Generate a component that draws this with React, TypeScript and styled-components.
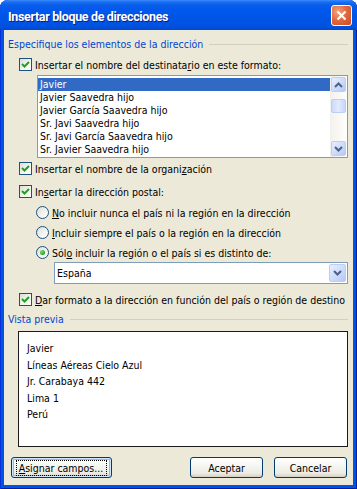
import React from 'react';
import styled, { createGlobalStyle } from 'styled-components';

const Global = createGlobalStyle`
  html, body { margin: 0; padding: 0; background: #ffffff; }
  body {
    font-family: "DejaVu Sans Condensed", "DejaVu Sans", sans-serif;
    font-size: 10.5px;
    color: #000;
  }
  * { box-sizing: border-box; }
`;

const Window = styled.div`
  width: 357px;
  height: 489px;
  display: flex;
  flex-direction: column;
  border-radius: 8px 8px 0 0;
  overflow: hidden;
  background: #0054e3;
  box-shadow: inset 1px 0 0 #0831d9, inset -1px 0 0 #001ea0, inset 0 -1px 0 #001ea0;
`;

const TitleBar = styled.div`
  height: 30px;
  flex: none;
  display: flex;
  align-items: center;
  justify-content: space-between;
  padding: 0 5px 0 8px;
  background: linear-gradient(
    to bottom,
    #3c8cff 0px,
    #1a6ef2 2px,
    #0a5ee8 5px,
    #0058ee 10px,
    #0055e5 18px,
    #0053e1 26px,
    #0049d0 30px
  );
`;

const Title = styled.span`
  color: #ffffff;
  font-family: Roboto, "Liberation Sans", sans-serif;
  font-weight: bold;
  font-size: 12.5px;
  letter-spacing: -0.35px;
  text-shadow: 1px 1px 0 #0a1e82;
  padding-top: 2px;
`;

const CloseBtn = styled.div`
  width: 21px;
  height: 21px;
  border: 1px solid #ffffff;
  border-radius: 3px;
  background: radial-gradient(circle at 30% 30%, #f3a47f 0%, #e3693f 45%, #cc4b22 100%);
  display: flex;
  align-items: center;
  justify-content: center;
  margin-top: 1px;
`;

const Client = styled.div`
  flex: 1;
  margin: 0 4px 4px 4px;
  background: #ece9d8;
  display: flex;
  flex-direction: column;
  padding: 7px 5px 0 4px;
`;

const SectionHeader = styled.div<{ $mt?: number }>`
  display: flex;
  align-items: center;
  height: 13px;
  margin-top: ${(p) => p.$mt ?? 0}px;
  color: #0046d5;
  white-space: nowrap;
`;

const HeaderLine = styled.div`
  flex: 1;
  height: 1px;
  margin-left: 6px;
  margin-top: 2px;
  background: #d0d0bf;
`;

const Row = styled.div<{ $mt: number; $ml: number }>`
  display: flex;
  align-items: center;
  height: 13px;
  margin-top: ${(p) => p.$mt}px;
  margin-left: ${(p) => p.$ml}px;
  white-space: nowrap;
  gap: 3px;
`;

const Box = styled.div`
  width: 13px;
  height: 13px;
  flex: none;
  border: 1px solid #1c5180;
  background: linear-gradient(135deg, #dcdcd7 0%, #f5f5f2 60%, #ffffff 100%);
  display: flex;
  align-items: center;
  justify-content: center;
`;

const Radio = styled.div`
  width: 13px;
  height: 13px;
  flex: none;
  border: 1px solid #1c5180;
  border-radius: 50%;
  background: linear-gradient(135deg, #dcdcd7 0%, #f5f5f2 60%, #ffffff 100%);
  display: flex;
  align-items: center;
  justify-content: center;
`;

const RadioDot = styled.div`
  width: 5px;
  height: 5px;
  border-radius: 50%;
  background: radial-gradient(circle at 35% 35%, #7fe07c 0%, #2eac2b 60%, #1e8f1b 100%);
`;

const U = styled.span`
  text-decoration: underline;
  text-underline-offset: 1px;
`;

const ListBox = styled.div`
  margin: 4px 0 0 29px;
  height: 83px;
  border: 1px solid #7f9db9;
  background: #ffffff;
  display: flex;
`;

const Items = styled.div`
  flex: 1;
  padding-top: 2px;
  display: flex;
  flex-direction: column;
`;

const Item = styled.div<{ $sel?: boolean }>`
  height: 13px;
  line-height: 13px;
  padding-left: 2px;
  white-space: nowrap;
  background: ${(p) => (p.$sel ? '#316ac5' : 'transparent')};
  color: ${(p) => (p.$sel ? '#ffffff' : '#000000')};
`;

const ScrollTrack = styled.div`
  width: 17px;
  flex: none;
  display: flex;
  flex-direction: column;
  background: linear-gradient(to right, #f3f1ec, #fefefb);
`;

const ScrollBtn = styled.div`
  width: 15px;
  height: 15px;
  margin: 1px;
  border: 1px solid #bccef5;
  border-radius: 2px;
  background: linear-gradient(135deg, #e8efff 0%, #c9d9fb 60%, #b5c8f3 100%);
  display: flex;
  align-items: center;
  justify-content: center;
`;

const Thumb = styled.div`
  width: 15px;
  height: 14px;
  margin: 6px 1px 0 1px;
  border: 1px solid #bccef5;
  border-radius: 2px;
  background: linear-gradient(to right, #cbdafc 0%, #e2eaff 50%, #c6d6fb 100%);
`;

const Spacer = styled.div`
  flex: 1;
`;

const Combo = styled.div`
  margin: 3px 0 0 46px;
  height: 22px;
  border: 1px solid #7f9db9;
  background: #ffffff;
  display: flex;
  align-items: center;
  padding-left: 2px;
`;

const ComboText = styled.div`
  flex: 1;
`;

const ComboBtn = styled(ScrollBtn)`
  width: 17px;
  height: 18px;
  margin: 1px;
`;

const Preview = styled.div`
  margin: 6px 0 0 10px;
  height: 116px;
  border: 1px solid #1a1a1a;
  background: #ffffff;
  padding: 8px 8px;
  line-height: 16.6px;
`;

const ButtonRow = styled.div`
  display: flex;
  margin: 10px 1px 0 3px;
  gap: 11px;
`;

const Btn = styled.div<{ $w: number; $focus?: boolean }>`
  width: ${(p) => p.$w}px;
  height: 21px;
  border: 1px solid #003c74;
  border-radius: 3px;
  background: linear-gradient(to bottom, #ffffff 0%, #f6f6f1 40%, #ecebe4 80%, #d6d0c5 100%);
  display: flex;
  align-items: center;
  justify-content: center;
  box-shadow: ${(p) =>
    p.$focus ? 'inset 0 0 0 1px #cee7ff, inset 0 0 0 2px #98b8ea' : 'inset 0 -1px 0 #d6d0c5'};
`;

const FocusRect = styled.span`
  outline: 1px dotted #000;
  outline-offset: 0px;
  padding: 1px 3px 1px 2px;
  line-height: 12px;
`;

const Wide = styled.div`
  flex: 1;
`;

const Check = () => (
  <svg width="9" height="9" viewBox="0 0 9 9">
    <path d="M1 4 L3.5 6.5 L8 2" fill="none" stroke="#21a121" strokeWidth="2" />
  </svg>
);

const CheckBox = () => (
  <Box>
    <Check />
  </Box>
);

const Chevron = ({ up }: { up?: boolean }) => (
  <svg width="9" height="6" viewBox="0 0 9 6">
    <path
      d={up ? 'M1 5 L4.5 1.5 L8 5' : 'M1 1 L4.5 4.5 L8 1'}
      fill="none"
      stroke="#4d6185"
      strokeWidth="2"
    />
  </svg>
);

const items = [
  'Javier',
  'Javier Saavedra hijo',
  'Javier García Saavedra hijo',
  'Sr. Javi Saavedra hijo',
  'Sr. Javi García Saavedra hijo',
  'Sr. Javier Saavedra hijo',
];

const previewLines = ['Javier', 'Líneas Aéreas Cielo Azul', 'Jr. Carabaya 442', 'Lima 1', 'Perú'];

export default function App() {
  return (
    <>
      <Global />
      <Window>
        <TitleBar>
          <Title>Insertar bloque de direcciones</Title>
          <CloseBtn>
            <svg width="11" height="11" viewBox="0 0 11 11">
              <path d="M1.5 1.5 L9.5 9.5 M9.5 1.5 L1.5 9.5" stroke="#ffffff" strokeWidth="2.2" />
            </svg>
          </CloseBtn>
        </TitleBar>
        <Client>
          <SectionHeader>
            Especifique los elementos de la dirección
            <HeaderLine />
          </SectionHeader>
          <Row $mt={8} $ml={11}>
            <CheckBox />
            <span>
              Insertar el nombre del destinata<U>r</U>io en este formato:
            </span>
          </Row>
          <ListBox>
            <Items>
              {items.map((t, i) => (
                <Item key={t} $sel={i === 0}>
                  {t}
                </Item>
              ))}
            </Items>
            <ScrollTrack>
              <ScrollBtn>
                <Chevron up />
              </ScrollBtn>
              <Thumb />
              <Spacer />
              <ScrollBtn>
                <Chevron />
              </ScrollBtn>
            </ScrollTrack>
          </ListBox>
          <Row $mt={4} $ml={11}>
            <CheckBox />
            <span>
              Insertar el nombre de la organi<U>z</U>ación
            </span>
          </Row>
          <Row $mt={10} $ml={11}>
            <CheckBox />
            <span>
              In<U>s</U>ertar la dirección postal:
            </span>
          </Row>
          <Row $mt={8} $ml={28}>
            <Radio />
            <span>
              <U>N</U>o incluir nunca el país ni la región en la dirección
            </span>
          </Row>
          <Row $mt={7} $ml={28}>
            <Radio />
            <span>
              <U>I</U>ncluir siempre el país o la región en la dirección
            </span>
          </Row>
          <Row $mt={7} $ml={28}>
            <Radio>
              <RadioDot />
            </Radio>
            <span>
              Sól<U>o</U> incluir la región o el país si es distinto de:
            </span>
          </Row>
          <Combo>
            <ComboText>España</ComboText>
            <ComboBtn>
              <Chevron />
            </ComboBtn>
          </Combo>
          <Row $mt={9} $ml={11}>
            <CheckBox />
            <span>
              <U>D</U>ar formato a la dirección en función del país o región de destino
            </span>
          </Row>
          <SectionHeader $mt={6}>
            Vista previa
            <HeaderLine />
          </SectionHeader>
          <Preview>
            {previewLines.map((l) => (
              <div key={l}>{l}</div>
            ))}
          </Preview>
          <ButtonRow>
            <Btn $w={101} $focus>
              <FocusRect>
                <U>A</U>signar campos...
              </FocusRect>
            </Btn>
            <Wide />
            <Btn $w={73}>Aceptar</Btn>
            <Btn $w={73}>Cancelar</Btn>
          </ButtonRow>
        </Client>
      </Window>
    </>
  );
}
